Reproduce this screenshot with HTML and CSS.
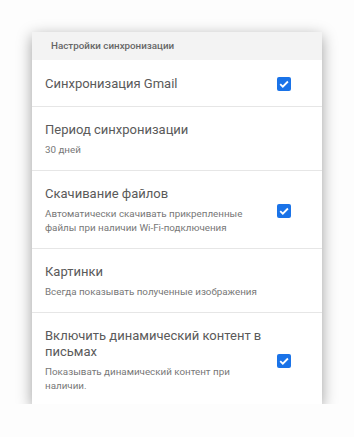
FILE: index.html
```html
<!DOCTYPE html>
<html lang="ru">
<head>
<meta charset="utf-8">
<link rel="stylesheet" href="styles.css">
</head>
<body>
<div class="card">
  <div class="header">Настройки синхронизации</div>
  <div class="row row-single">
    <div class="text"><div class="title">Синхронизация Gmail</div></div>
    <span class="check"><svg viewBox="0 0 14 14" width="14" height="14"><path d="M3.2 7.2 L5.8 9.7 L10.9 4.5" fill="none" stroke="#fff" stroke-width="1.8"/></svg></span>
  </div>
  <div class="row">
    <div class="text">
      <div class="title">Период синхронизации</div>
      <div class="sub">30 дней</div>
    </div>
  </div>
  <div class="row">
    <div class="text">
      <div class="title">Скачивание файлов</div>
      <div class="sub">Автоматически скачивать прикрепленные файлы при наличии Wi-Fi-подключения</div>
    </div>
    <span class="check"><svg viewBox="0 0 14 14" width="14" height="14"><path d="M3.2 7.2 L5.8 9.7 L10.9 4.5" fill="none" stroke="#fff" stroke-width="1.8"/></svg></span>
  </div>
  <div class="row">
    <div class="text">
      <div class="title">Картинки</div>
      <div class="sub">Всегда показывать полученные изображения</div>
    </div>
  </div>
  <div class="row last">
    <div class="text">
      <div class="title">Включить динамический контент в письмах</div>
      <div class="sub">Показывать динамический контент при наличии.</div>
    </div>
    <span class="check"><svg viewBox="0 0 14 14" width="14" height="14"><path d="M3.2 7.2 L5.8 9.7 L10.9 4.5" fill="none" stroke="#fff" stroke-width="1.8"/></svg></span>
  </div>
</div>
</body>
</html>
```

FILE: styles.css
```css
html, body {
  margin: 0;
  padding: 0;
  background: #fdfdfd;
}
body {
  padding: 32px 0 0 32px;
  font-family: Roboto, "Noto Sans", sans-serif;
}
.card {
  width: 290px;
  background: #fff;
  box-shadow: 0 4px 14px rgba(0, 0, 0, 0.38);
}
.header {
  height: 28px;
  line-height: 28px;
  padding-left: 19px;
  background: #f3f3f3;
  color: #666;
  font-size: 9.8px;
  font-weight: 500;
}
.row {
  display: flex;
  align-items: center;
  padding: 15px 0 13px 13px;
  border-bottom: 1px solid #e6e6e6;
}
.row.last {
  border-bottom: none;
  padding-bottom: 11px;
}
.row-single {
  padding-top: 16px;
  padding-bottom: 14px;
}
.text {
  width: 220px;
}
.title {
  font-size: 13px;
  line-height: 16px;
  color: #5a5a5a;
}
.sub {
  margin-top: 5px;
  font-size: 9.8px;
  line-height: 14px;
  color: #777;
}
.check {
  margin-left: 12px;
  width: 14px;
  height: 14px;
  border-radius: 2px;
  background: #1a73e8;
  display: flex;
}
```
